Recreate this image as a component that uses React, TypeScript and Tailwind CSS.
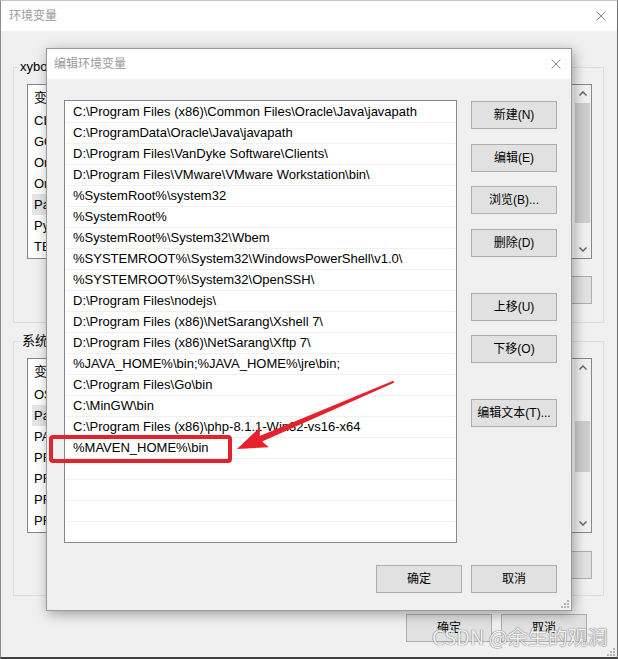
import type { ReactNode } from "react";

const PATHS = [
  "C:\\Program Files (x86)\\Common Files\\Oracle\\Java\\javapath",
  "C:\\ProgramData\\Oracle\\Java\\javapath",
  "D:\\Program Files\\VanDyke Software\\Clients\\",
  "D:\\Program Files\\VMware\\VMware Workstation\\bin\\",
  "%SystemRoot%\\system32",
  "%SystemRoot%",
  "%SystemRoot%\\System32\\Wbem",
  "%SYSTEMROOT%\\System32\\WindowsPowerShell\\v1.0\\",
  "%SYSTEMROOT%\\System32\\OpenSSH\\",
  "D:\\Program Files\\nodejs\\",
  "D:\\Program Files (x86)\\NetSarang\\Xshell 7\\",
  "D:\\Program Files (x86)\\NetSarang\\Xftp 7\\",
  "%JAVA_HOME%\\bin;%JAVA_HOME%\\jre\\bin;",
  "C:\\Program Files\\Go\\bin",
  "C:\\MinGW\\bin",
  "C:\\Program Files (x86)\\php-8.1.1-Win32-vs16-x64",
  "%MAVEN_HOME%\\bin",
  "",
  "",
  "",
];

const USER_VARS = [
  ["CLASSPATH", ".;%JAVA_HOME%\\lib;%JAVA_HOME%\\lib\\tools.jar"],
  ["GOPATH", "C:\\Users\\xybo\\go"],
  ["OneDrive", "C:\\Users\\xybo\\OneDrive"],
  ["OneDriveConsumer", "C:\\Users\\xybo\\OneDrive"],
  ["Path", "C:\\Users\\xybo\\AppData\\Local\\Microsoft\\WindowsApps;"],
  ["PyCharm Community Edition", "D:\\Program Files\\JetBrains\\bin;"],
  ["TEMP", "%USERPROFILE%\\AppData\\Local\\Temp"],
];

const SYS_VARS = [
  ["OS", "Windows_NT"],
  ["Path", "C:\\Program Files (x86)\\Common Files\\Oracle\\Java\\javapath;"],
  ["PATHEXT", ".COM;.EXE;.BAT;.CMD;.VBS;.VBE;.JS;.JSE;.WSF;.WSH;.MSC"],
  ["PROCESSOR_ARCHITECTURE", "AMD64"],
  ["PROCESSOR_IDENTIFIER", "Intel64 Family 6 Model 158 Stepping 10"],
  ["PROCESSOR_LEVEL", "6"],
  ["PROCESSOR_REVISION", "9e0a"],
];

function CloseIcon() {
  return (
    <svg width="10" height="10" viewBox="0 0 10 10">
      <path d="M0.5 0.5 L9.5 9.5 M9.5 0.5 L0.5 9.5" stroke="#8a8a8a" strokeWidth="1" />
    </svg>
  );
}

function Chevron({ down = false }: { down?: boolean }) {
  return (
    <svg width="8" height="5" viewBox="0 0 8 5">
      <path
        d={down ? "M0.5 0.5 L4 4 L7.5 0.5" : "M0.5 4.5 L4 1 L7.5 4.5"}
        stroke="#606060"
        strokeWidth="1.4"
        fill="none"
      />
    </svg>
  );
}

function Grip() {
  return (
    <svg width="10" height="10" viewBox="0 0 10 10">
      <g fill="#b4b4b4">
        <rect x="8" y="2" width="2" height="2" />
        <rect x="8" y="5" width="2" height="2" />
        <rect x="5" y="5" width="2" height="2" />
        <rect x="8" y="8" width="2" height="2" />
        <rect x="5" y="8" width="2" height="2" />
        <rect x="2" y="8" width="2" height="2" />
      </g>
    </svg>
  );
}

function Btn({ children, className = "" }: { children: ReactNode; className?: string }) {
  return (
    <button
      type="button"
      className={`flex h-[28px] w-[86px] shrink-0 items-center justify-center border border-[#adadad] bg-[#e1e1e1] text-[12px] text-black ${className}`}
    >
      {children}
    </button>
  );
}

function VarList({
  rows,
  selected,
  thumbTop,
  thumbHeight,
}: {
  rows: string[][];
  selected: number;
  thumbTop: string;
  thumbHeight: string;
}) {
  return (
    <div className="flex h-[175px] border border-[#828790] bg-white">
      <div className="min-w-0 flex-1 overflow-hidden">
        <div className="flex h-[25px] items-center whitespace-nowrap text-[13px]">
          <span className="w-[170px] pl-[6px]">变量</span>
          <span className="pl-[6px]">值</span>
        </div>
        {rows.map(([name, value], i) => (
          <div
            key={name}
            className={`mx-[4px] flex h-[21px] items-center whitespace-nowrap px-[2px] text-[13px] ${
              i === selected ? "bg-[#e5e5e5]" : ""
            }`}
          >
            <span className="w-[164px] overflow-hidden">{name}</span>
            <span className="pl-[6px]">{value}</span>
          </div>
        ))}
      </div>
      <div className="flex w-[17px] flex-col bg-[#f0f0f0]">
        <div className="flex h-[17px] items-center justify-center">
          <Chevron />
        </div>
        <div className="flex-1">
          <div className={`mx-[1px] bg-[#cdcdcd] ${thumbTop} ${thumbHeight}`} />
        </div>
        <div className="flex h-[17px] items-center justify-center">
          <Chevron down />
        </div>
      </div>
    </div>
  );
}

export default function App() {
  return (
    <div className="relative h-[659px] w-[618px] overflow-hidden font-['Liberation_Sans','Noto_Sans_CJK_SC',sans-serif] text-black">
      {/* 环境变量 window behind */}
      <div className="flex h-full w-full flex-col border-b-2 border-l border-r border-t border-b-[#404040] border-l-[#8c8c8c] border-r-[#6e6e6e] border-t-[#c7c7c7] bg-[#f0f0f0]">
        <div className="flex h-[30px] shrink-0 items-center justify-between bg-white pl-[8px] pr-[11px]">
          <span className="text-[12px] text-[#9a9a9a]">环境变量</span>
          <CloseIcon />
        </div>

        <div className="flex flex-col pl-[12px] pr-[13px]">
          <fieldset className="mt-[28px] border border-[#dcdcdc]">
            <legend className="ml-[4px] px-[2px] text-[13px] leading-[16px]">xybo 的用户变量(U)</legend>
            <div className="pb-[18px] pl-[13px] pr-[11px] pt-[9px]">
              <VarList rows={USER_VARS} selected={4} thumbTop="mt-[1px]" thumbHeight="h-[120px]" />
              <div className="mt-[17px] flex justify-end gap-[9px]">
                <Btn>新建(N)...</Btn>
                <Btn>编辑(E)...</Btn>
                <Btn>删除(D)</Btn>
              </div>
            </div>
          </fieldset>

          <fieldset className="mt-[10px] border border-[#dcdcdc]">
            <legend className="ml-[6px] px-[2px] text-[13px] leading-[16px]">系统变量(S)</legend>
            <div className="pb-[16px] pl-[13px] pr-[11px] pt-[9px]">
              <VarList rows={SYS_VARS} selected={1} thumbTop="mt-[45px]" thumbHeight="h-[51px]" />
              <div className="mt-[18px] flex justify-end gap-[9px]">
                <Btn>新建(W)...</Btn>
                <Btn>编辑(I)...</Btn>
                <Btn>删除(L)</Btn>
              </div>
            </div>
          </fieldset>

          <div className="mt-[18px] flex justify-end gap-[9px] pr-[17px]">
            <Btn>确定</Btn>
            <Btn>取消</Btn>
          </div>
        </div>
      </div>
      <div className="absolute bottom-[3px] right-[3px]">
        <Grip />
      </div>

      {/* 编辑环境变量 dialog */}
      <div className="absolute left-[46px] top-[48px] flex h-[563px] w-[526px] flex-col border border-[#9a9a9a] bg-[#f0f0f0] shadow-[2px_3px_12px_rgba(0,0,0,0.35)]">
        <div className="flex h-[30px] shrink-0 items-center justify-between bg-white pl-[7px] pr-[10px]">
          <span className="text-[12px] text-[#9a9a9a]">编辑环境变量</span>
          <CloseIcon />
        </div>

        <div className="flex pl-[17px] pt-[21px]">
          <div className="h-[443px] w-[393px] border border-[#828790] bg-white pt-[1px]">
            {PATHS.map((p, i) => (
              <div
                key={i}
                className="mx-[1px] h-[21px] whitespace-nowrap border-b border-[#f0f0f0] pl-[7px] text-[13px] leading-[20px]"
              >
                {p}
              </div>
            ))}
          </div>
          <div className="ml-[14px] flex flex-col pt-[1px]">
            <Btn>新建(N)</Btn>
            <Btn className="mt-[15px]">编辑(E)</Btn>
            <Btn className="mt-[14px]">浏览(B)...</Btn>
            <Btn className="mt-[15px]">删除(D)</Btn>
            <Btn className="mt-[36px]">上移(U)</Btn>
            <Btn className="mt-[14px]">下移(O)</Btn>
            <Btn className="mt-[36px]">编辑文本(T)...</Btn>
          </div>
        </div>

        <div className="mt-[22px] flex justify-end gap-[9px] pr-[14px]">
          <Btn>确定</Btn>
          <Btn>取消</Btn>
        </div>

        <div className="absolute bottom-[2px] right-[2px]">
          <Grip />
        </div>
      </div>

      {/* annotation: red box + arrow */}
      <svg className="pointer-events-none absolute left-0 top-0" width="618" height="659" viewBox="0 0 618 659">
        <rect x="51" y="437" width="179" height="24" rx="2" fill="none" stroke="#e5212b" strokeWidth="4" />
        <polygon
          fill="#e5212b"
          points="392.6,381.1 259.7,435.9 260.2,427.1 237,449 268.9,447.3 262.1,441.5 393.4,382.9"
        />
        <circle cx="393" cy="382" r="1" fill="#e5212b" />
      </svg>

      {/* watermark */}
      <div className="pointer-events-none absolute left-[432px] top-[626px] whitespace-nowrap font-['Noto_Sans_CJK_SC',sans-serif] text-[20px] leading-[22px] text-[#f2f2f2] [text-shadow:0_0_1px_#6e6e6e,0_0_1px_#6e6e6e]">
        CSDN @余生的观澜
      </div>
    </div>
  );
}
